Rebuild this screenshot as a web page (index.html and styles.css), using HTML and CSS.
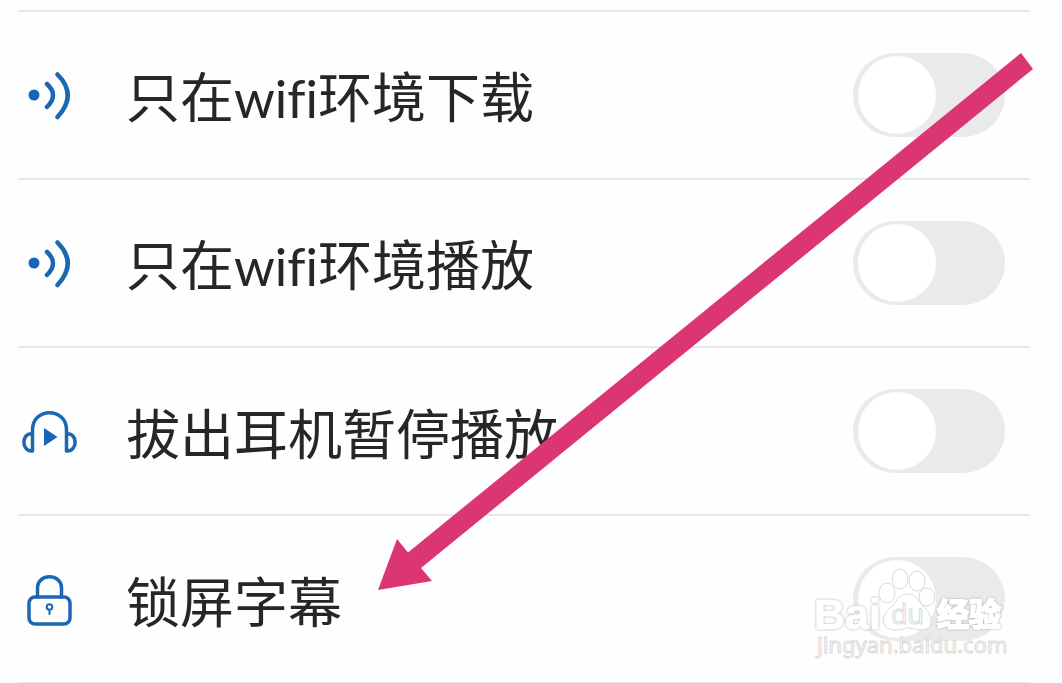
FILE: index.html
```html
<!DOCTYPE html>
<html lang="zh-CN">
<head>
<meta charset="utf-8">
<meta name="viewport" content="width=device-width, initial-scale=1">
<title>设置</title>
<link rel="stylesheet" href="styles.css">
</head>
<body>
<main class="settings">
  <div class="row">
    <svg class="icon" viewBox="0 0 60 60" aria-hidden="true">
      <circle class="fill" cx="16" cy="30" r="5.5"/>
      <path class="wave" d="M29 19Q41 30 29 42M39.500 9.500Q60 30 39.500 52"/>
    </svg>
    <label class="label" for="wifi-download">只在<span class="latin">wifi</span>环境下载</label>
    <input class="switch" type="checkbox" role="switch" id="wifi-download">
  </div>
  <div class="row">
    <svg class="icon" viewBox="0 0 60 60" aria-hidden="true">
      <circle class="fill" cx="16" cy="30" r="5.5"/>
      <path class="wave" d="M29 19Q41 30 29 42M39.500 9.500Q60 30 39.500 52"/>
    </svg>
    <label class="label" for="wifi-play">只在<span class="latin">wifi</span>环境播放</label>
    <input class="switch" type="checkbox" role="switch" id="wifi-play">
  </div>
  <div class="row">
    <svg class="icon" viewBox="0 0 60 60" aria-hidden="true">
      <path class="line" d="M14.500 50V29C14.500 6 48.500 6 48.500 29V50M14.500 33C3 31 3 51 14.500 50M48.500 33C60 31 60 51 48.500 50"/>
      <path class="fill" d="M26 27L39.500 36L26 45Z"/>
    </svg>
    <label class="label" for="headset">拔出耳机暂停播放</label>
    <input class="switch" type="checkbox" role="switch" id="headset">
  </div>
  <div class="row">
    <svg class="icon" viewBox="0 0 60 60" aria-hidden="true">
      <path class="line" d="M19.500 28V19C19.500 4 43.500 4 43.500 19V28"/>
      <rect class="line" x="11" y="28" width="41" height="27" rx="6"/>
      <circle class="keyhole" cx="31.500" cy="38" r="2.800"/>
      <path class="keyhole" d="M31.500 41V45"/>
    </svg>
    <label class="label" for="lock-caption">锁屏字幕</label>
    <input class="switch" type="checkbox" role="switch" id="lock-caption">
  </div>
  <svg class="arrow" viewBox="0 0 1062 683" aria-hidden="true">
    <path d="M378 590L397 539L408 552.5L1021 53L1033 69L421 568L432 581Z"/>
  </svg>
  <svg class="watermark" viewBox="0 0 200 100" role="img" aria-label="Baidu 经验 jingyan.baidu.com">
    <text class="brand" x="0" y="64" font-size="43">Bai</text>
    <ellipse cx="73" cy="28" rx="8" ry="10"/>
    <ellipse cx="86" cy="14" rx="8" ry="10"/>
    <ellipse cx="103" cy="16" rx="8" ry="10"/>
    <ellipse cx="113" cy="32" rx="8" ry="9"/>
    <path d="M93 29C84 29 82 39 75 44C65 53 69 65 81 65C89 65 90 63 94 63C99 63 105 66 112 64C120 61 118 50 111 43C105 38 103 29 93 29Z"/>
    <text class="du" x="77" y="59" font-size="27">du</text>
    <text class="brand cjk" x="123" y="61" font-size="32">经验</text>
    <text class="site" x="3" y="88" font-size="22">jingyan.baidu.com</text>
  </svg>
</main>
</body>
</html>
```
FILE: styles.css
```css
* { box-sizing: border-box; }
body {
  margin: 0;
  background: #fefefe;
  color: #262626;
  font-family: "Noto Sans CJK SC", sans-serif;
}
.settings {
  position: relative;
  padding: 10px 32px 0 18px;
  overflow: hidden;
}
.row {
  display: flex;
  align-items: center;
  height: 168px;
  padding-right: 25px;
  border-top: 2px solid #e8e8e8;
}
.row:last-of-type {
  height: 169px;
  border-bottom: 1px solid #e8e8e8;
}
.icon {
  width: 60px;
  height: 60px;
  flex: none;
  fill: none;
  stroke-linecap: round;
  stroke-linejoin: round;
}
.fill { fill: #1565bb; }
.line { stroke: #1b67b3; stroke-width: 3.5; }
.wave { stroke: #1b67b3; stroke-width: 4.5; }
.keyhole { stroke: #1b67b3; stroke-width: 2; }
.label {
  flex: 1;
  margin-left: 48px;
  padding-top: 2px;
  font-size: 54px;
  line-height: 80px;
  white-space: nowrap;
}
.latin {
  font-family: Lato, sans-serif;
  font-size: 52px;
  font-variant-ligatures: none;
}
.switch {
  appearance: none;
  flex: none;
  display: flex;
  align-items: center;
  width: 152px;
  height: 84px;
  margin: 0;
  padding: 0 5px;
  border-radius: 42px;
  background: #eaeaea;
}
.switch::before {
  content: "";
  width: 78px;
  height: 78px;
  border-radius: 50%;
  background: #fff;
}
.switch:checked { justify-content: flex-end; background: #1565bb; }
.arrow {
  position: absolute;
  inset: 0;
  width: 100%;
  fill: #dc3574;
  pointer-events: none;
}
.watermark {
  position: absolute;
  right: 48px;
  bottom: 18px;
  width: 200px;
  height: 100px;
  fill: #fff;
  stroke: #d9d9d9;
  stroke-width: 1;
  overflow: visible;
  pointer-events: none;
}
.brand {
  font-family: "Liberation Sans", sans-serif;
  font-weight: 700;
  stroke: #fff;
  filter: drop-shadow(0 0 1px #aaa);
}
.cjk { font-family: "Noto Sans CJK SC", sans-serif; stroke-width: 2; }
.du { font-family: "Open Sans", sans-serif; }
.site { font-family: "Noto Sans", sans-serif; }
```
